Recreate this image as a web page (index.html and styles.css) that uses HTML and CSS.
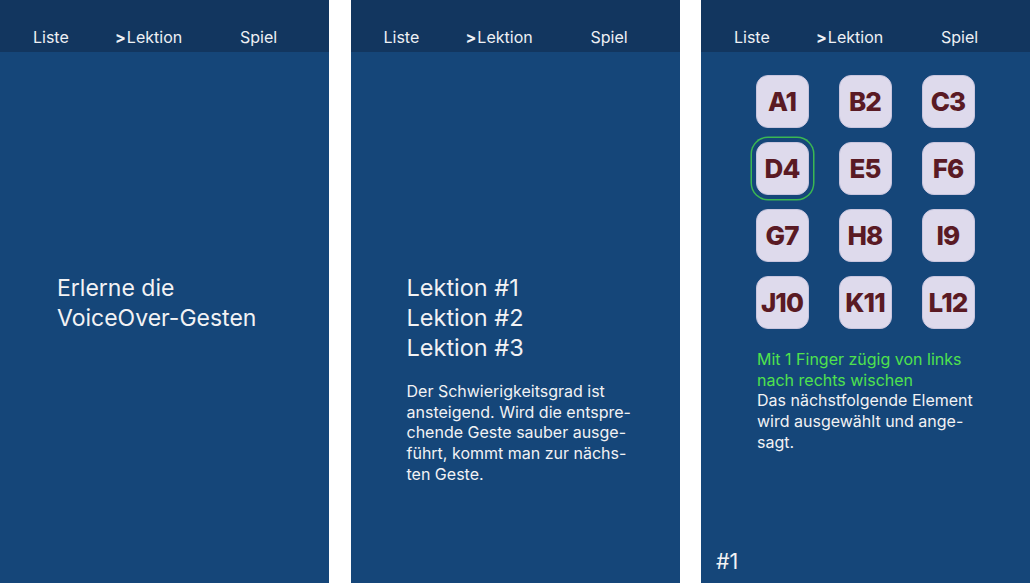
FILE: index.html
```html
<!DOCTYPE html>
<html lang="de">
<head>
<meta charset="utf-8">
<title>VoiceOver-Gesten</title>
<link rel="stylesheet" href="styles.css">
</head>
<body>
<div class="stage">
  <section class="screen">
    <nav class="bar">
      <span class="nav-item w1">Liste</span>
      <span class="nav-item w2"><b>&gt;</b>Lektion</span>
      <span class="nav-item">Spiel</span>
    </nav>
    <div class="content intro">
      <h1 class="title">Erlerne die<br>VoiceOver-Gesten</h1>
    </div>
  </section>

  <section class="screen">
    <nav class="bar">
      <span class="nav-item w1">Liste</span>
      <span class="nav-item w2"><b>&gt;</b>Lektion</span>
      <span class="nav-item">Spiel</span>
    </nav>
    <div class="content intro">
      <ul class="lessons">
        <li>Lektion #1</li>
        <li>Lektion #2</li>
        <li>Lektion #3</li>
      </ul>
      <p class="copy">Der Schwierigkeitsgrad ist<br>ansteigend. Wird die entspre-<br>chende Geste sauber ausge-<br>führt, kommt man zur nächs-<br>ten Geste.</p>
    </div>
  </section>

  <section class="screen">
    <nav class="bar">
      <span class="nav-item w1">Liste</span>
      <span class="nav-item w2"><b>&gt;</b>Lektion</span>
      <span class="nav-item">Spiel</span>
    </nav>
    <div class="content game">
      <div class="grid">
        <button class="key">A1</button>
        <button class="key">B2</button>
        <button class="key">C3</button>
        <button class="key focus">D4</button>
        <button class="key">E5</button>
        <button class="key">F6</button>
        <button class="key">G7</button>
        <button class="key">H8</button>
        <button class="key">I9</button>
        <button class="key">J10</button>
        <button class="key">K11</button>
        <button class="key">L12</button>
      </div>
      <p class="copy hint"><span class="green">Mit 1 Finger zügig von links<br>nach rechts wischen</span><br>Das nächstfolgende Element<br>wird ausgewählt und ange-<br>sagt.</p>
      <div class="counter">#1</div>
    </div>
  </section>
</div>
</body>
</html>
```

FILE: styles.css
```css
* { box-sizing: border-box; }

html, body {
  margin: 0;
  padding: 0;
  background: #ffffff;
}

body {
  font-family: "Inter", "Liberation Sans", Arial, sans-serif;
  color: #f2f2f4;
  width: 1030px;
  height: 585px;
  overflow: hidden;
}

.stage {
  display: grid;
  grid-template-columns: 329px 329px 329px;
  column-gap: 21.5px;
  height: 583px;
}

.screen {
  display: flex;
  flex-direction: column;
  background: #154679;
  height: 583px;
}

.bar {
  height: 52px;
  flex: none;
  background: #12365f;
  display: flex;
  align-items: flex-end;
  padding: 0 0 5px 33px;
  font-size: 16px;
  line-height: 20px;
  color: #eef0f4;
}

.nav-item { display: block; white-space: nowrap; }
.nav-item.w1 { width: 82px; }
.nav-item.w2 { width: 125px; }
.nav-item b { font-weight: 700; margin-right: 1px; }

.content {
  flex: 1;
  display: flex;
  flex-direction: column;
  padding-left: 56px;
}

.intro { padding-top: 221px; }

.title {
  margin: 0;
  font-weight: 400;
  font-size: 23px;
  line-height: 30px;
  padding-left: 1px;
}

.lessons {
  list-style: none;
  margin: 0;
  padding: 0;
  font-size: 23.5px;
  line-height: 30px;
}

.copy {
  margin: 18px 0 0;
  font-size: 16px;
  line-height: 20.7px;
}

.game { padding-top: 23px; padding-left: 55px; }

.grid {
  display: grid;
  grid-template-columns: repeat(3, 53px);
  grid-auto-rows: 53px;
  column-gap: 30px;
  row-gap: 14px;
}

.key {
  width: 53px;
  height: 53px;
  border: 1px solid #c8c5de;
  border-radius: 12px;
  background: #dedaec;
  color: #5a1a24;
  font-family: "Inter", "Liberation Sans", Arial, sans-serif;
  font-weight: 800;
  font-size: 26px;
  letter-spacing: -0.9px;
  padding: 0 1px 0 0;
  display: flex;
  align-items: center;
  justify-content: center;
}

.key.focus {
  box-shadow: 0 0 0 4px #154679, 0 0 0 5.5px #3bb752;
}

.hint { margin-top: 20px; padding-left: 1px; }

.green { color: #4fe24d; }

.counter {
  margin-top: auto;
  margin-left: -40px;
  margin-bottom: 7px;
  font-size: 21.5px;
  line-height: 30px;
}
```
